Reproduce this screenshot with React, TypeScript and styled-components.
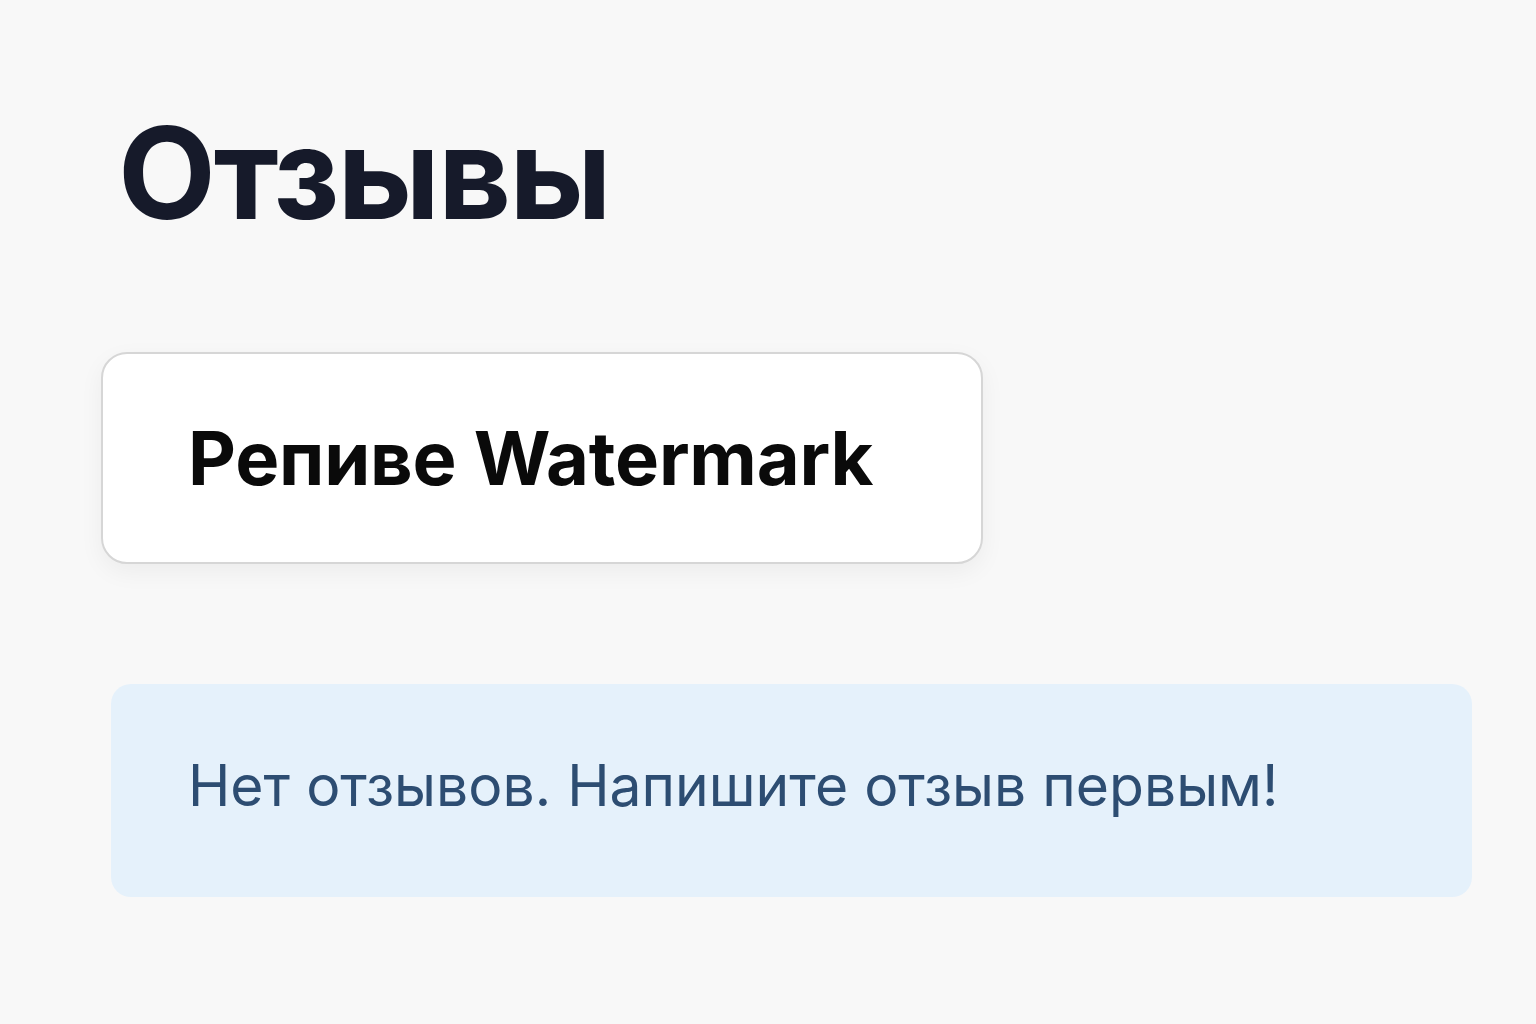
import * as React from "react";
import styled, { createGlobalStyle } from "styled-components";

const Global = createGlobalStyle`
  html, body {
    margin: 0;
    padding: 0;
    background: #f8f8f8;
  }
  body {
    font-family: Inter, "Noto Sans", "DejaVu Sans", sans-serif;
  }
`;

const Page = styled.main`
  width: 1536px;
  height: 1024px;
  box-sizing: border-box;
  padding: 93px 64px 0 101px;
  display: flex;
  flex-direction: column;
  align-items: flex-start;
`;

const Title = styled.h1`
  margin: 0 0 0 17px;
  font-size: 127px;
  line-height: 160px;
  font-weight: 700;
  color: #161a2a;
  letter-spacing: -2px;
`;

const ProductCard = styled.section`
  margin-top: 99px;
  width: 882px;
  height: 212px;
  box-sizing: border-box;
  display: flex;
  align-items: center;
  padding: 0 85px;
  background: #fff;
  border: 2px solid #d6d6d6;
  border-radius: 26px;
  box-shadow: 0 8px 24px rgba(0, 0, 0, 0.05);
`;

const ProductName = styled.h2`
  margin: 0;
  font-size: 74px;
  font-weight: 700;
  color: #0a0a0a;
  letter-spacing: -0.2px;
`;

const Notice = styled.div`
  margin: 120px 0 0 10px;
  align-self: stretch;
  height: 213px;
  box-sizing: border-box;
  display: flex;
  align-items: center;
  padding: 0 77px 10px 77px;
  background: #e5f1fb;
  border-radius: 20px;
  color: #2d4d72;
  font-size: 57px;
  font-weight: 400;
`;

export default function App() {
  return (
    <>
      <Global />
      <Page>
        <Title>Отзывы</Title>
        <ProductCard>
          <ProductName>Репиве Watermark</ProductName>
        </ProductCard>
        <Notice>Нет отзывов. Напишите отзыв первым!</Notice>
      </Page>
    </>
  );
}
